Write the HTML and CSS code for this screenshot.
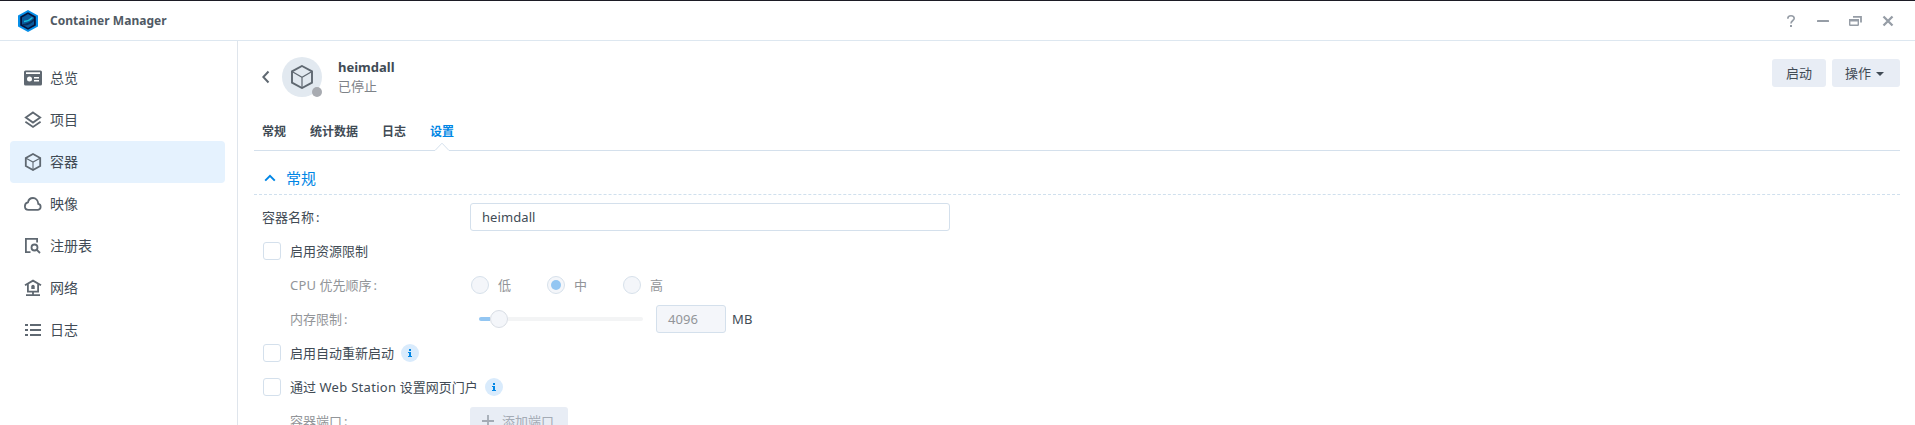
FILE: index.html
```html
<!DOCTYPE html>
<html lang="zh-CN">
<head>
<meta charset="utf-8">
<title>Container Manager</title>
<link rel="stylesheet" href="styles.css">
</head>
<body>
<div class="window">
  <header class="titlebar">
    <svg class="logo" width="22" height="24" viewBox="0 0 22 24">
      <path d="M11 1L21 6.500V17.500L11 23L1 17.500V6.500Z" fill="#078fe8"/>
      <path d="M11 3.200L18.800 7.600V16.400L11 20.800L3.200 16.400V7.600Z" fill="#07133a"/>
      <path d="M11 5L17 8.500V15.500L11 19L5 15.500V8.500Z" fill="#0a5a9c"/>
      <path d="M5 15C9 15 14 13 17 9.500V12C14 15 10 17 6.500 16.400Z" fill="#07305f"/>
      <path d="M7 12.500C10 12.300 13 11 15.500 8.500" fill="none" stroke="#18c0dc" stroke-width="1.300"/>
    </svg>
    <h1 class="title">Container Manager</h1>
    <div class="controls">
      <svg width="12" height="12" viewBox="0 0 12 12"><path d="M2.800 3.700C2.800 1.700 4.200 .8 6 .8S9.200 1.900 9.200 3.500C9.200 5.500 6 5.600 6 8.400" fill="none" stroke="#969da6" stroke-width="1.600"/><rect x="5" y="10" width="2" height="2" fill="#969da6"/></svg>
      <svg width="12" height="12" viewBox="0 0 12 12"><rect y="5" width="12" height="2" rx=".5" fill="#969da6"/></svg>
      <svg width="13" height="12" viewBox="0 0 13 12"><path d="M4 1.900H12V7.500" fill="none" stroke="#969da6" stroke-width="1.800"/><rect x=".7" y="4.700" width="8.600" height="5.600" rx=".5" fill="none" stroke="#969da6" stroke-width="1.400"/><path d="M0 4H10V6.500H0Z" fill="#969da6"/></svg>
      <svg width="12" height="12" viewBox="0 0 12 12"><path d="M1.500 1.500L10.500 10.500M10.500 1.500L1.500 10.500" stroke="#969da6" stroke-width="2.300"/></svg>
    </div>
  </header>
  <div class="body">
    <nav class="sidebar">
      <a class="nav-item"><svg class="icon" viewBox="0 0 18 18"><path fill-rule="evenodd" d="M1.500 1.500H16.500Q18 1.500 18 3V15Q18 16.500 16.500 16.500H1.500Q0 16.500 0 15V3Q0 1.500 1.500 1.500ZM2 3.200V5H16V3.200ZM5.500 7.500A2.500 2.500 0 1 0 5.500 12.500A2.500 2.500 0 1 0 5.500 7.500ZM10 8V9.400H15V8ZM10 11V12.400H15V11Z" fill="#5f6871"/></svg><span>总览</span></a>
      <a class="nav-item"><svg class="icon line" viewBox="0 0 18 18"><path d="M9 1.400L16.200 6.500L9 11.600L1.800 6.500ZM1.400 10.700L9 16L16.600 10.700"/></svg><span>项目</span></a>
      <a class="nav-item active"><svg class="icon line" viewBox="0 0 18 18"><path d="M9 1L16.200 5V13L9 17L1.800 13V5Z"/><path class="thin" d="M2 5.200L9 9L16 5.200M9 9V17"/></svg><span>容器</span></a>
      <a class="nav-item"><svg class="icon line" viewBox="0 0 18 18"><path d="M4.500 14.800H14A3 3 0 0 0 14.300 8.900C14 5.500 11.700 3 9 3C6.600 3 4.500 4.500 4 7.300C2 7.700 .9 9.300 .9 11.200C.9 13.200 2.400 14.800 4.500 14.800Z"/></svg><span>映像</span></a>
      <a class="nav-item"><svg class="icon line" viewBox="0 0 18 18"><path d="M6.500 15.100H1.900V1.900H13.100V5.500"/><circle cx="10.500" cy="10.500" r="3"/><path d="M12.600 12.600L16 16"/></svg><span>注册表</span></a>
      <a class="nav-item"><svg class="icon line" viewBox="0 0 18 18"><path d="M1 6.300L9 1.600L17 6.300M3.900 5.300V12.600H14.100V5.300M9 12.600V16M2 16.100H16"/><path d="M7.300 7.500Q7.300 5.800 9 5.800T10.700 7.500V10H7.300Z" fill="#5f6871" stroke="none"/></svg><span>网络</span></a>
      <a class="nav-item"><svg class="icon line" viewBox="0 0 18 18"><path d="M1 4H4M6 4H17M1 9H4M6 9H17M1 14H4M6 14H17"/></svg><span>日志</span></a>
    </nav>
    <main class="main">
      <section class="head">
        <svg class="back" width="8" height="14" viewBox="0 0 8 14"><path d="M6.500 1.500L1.300 7L6.500 12.500" fill="none" stroke="#5f6871" stroke-width="2"/></svg>
        <div class="avatar">
          <svg width="22" height="24" viewBox="0 0 22 24" fill="none" stroke="#5f6871"><path d="M11 1L21 6.400V17.600L11 23L1 17.600V6.400Z" stroke-width="1.900"/><path d="M1 6.500L11 12.200L21 6.500M11 12V23" stroke-width="1.200"/></svg>
          <span class="status-dot"></span>
        </div>
        <div class="ident"><strong class="name">heimdall</strong><span class="state">已停止</span></div>
        <div class="actions"><button class="btn">启动</button><button class="btn menu">操作<i class="caret"></i></button></div>
      </section>
      <div class="tabs">
        <a class="tab">常规</a><a class="tab">统计数据</a><a class="tab">日志</a>
        <a class="tab current">设置<svg class="notch" width="16" height="9" viewBox="0 0 16 9"><path d="M0 7H16V9H0Z" fill="#fff"/><path d="M0 8.500H1L8 1.200L15 8.500H16" fill="#fff" stroke="#d4e0ec"/></svg></a>
      </div>
      <h2 class="section"><svg width="12" height="8" viewBox="0 0 12 8"><path d="M1.200 6.600L6 1.900L10.800 6.600" fill="none" stroke="#0086e5" stroke-width="2"/></svg>常规</h2>
      <form class="form">
        <div class="row"><span class="label">容器名称<span class="colon">:</span></span><span class="input wide">heimdall</span></div>
        <div class="row"><i class="check"></i><span>启用资源限制</span></div>
        <div class="row off"><span class="label sub"><span class="cpu">CPU</span> 优先顺序<span class="colon">:</span></span>
          <span class="option"><i class="radio"></i>低</span><span class="option"><i class="radio on"></i>中</span><span class="option"><i class="radio"></i>高</span></div>
        <div class="row off"><span class="label sub">内存限制<span class="colon">:</span></span>
          <span class="slider"><i class="fill"></i><i class="knob"></i><i class="rest"></i></span>
          <span class="input num">4096</span><span class="unit">MB</span></div>
        <div class="row"><i class="check"></i><span>启用自动重新启动</span><svg class="info" viewBox="0 0 18 18"><circle cx="9" cy="9" r="9" fill="#d9ebfc"/><path d="M8 5H10V7H8ZM7 8H10V12H11V13H7V12H8V9H7Z" fill="#0086e5"/></svg></div>
        <div class="row"><i class="check"></i><span>通过 <span class="product">Web Station</span> 设置网页门户</span><svg class="info" viewBox="0 0 18 18"><circle cx="9" cy="9" r="9" fill="#d9ebfc"/><path d="M8 5H10V7H8ZM7 8H10V12H11V13H7V12H8V9H7Z" fill="#0086e5"/></svg></div>
        <div class="row off"><span class="label sub">容器端口<span class="colon">:</span></span><span class="add"><svg width="12" height="12" viewBox="0 0 12 12"><path d="M6 0V12M0 6H12" stroke="#a4abb5" stroke-width="1.800"/></svg><span>添加端口</span></span></div>
      </form>
    </main>
  </div>
</div>
</body>
</html>
```
FILE: styles.css
```css
* { box-sizing: border-box; }
body { margin: 0; overflow: hidden; background: #fff; color: #414b55; font: 13px/20px "Noto Sans", "Noto Sans CJK SC", sans-serif; }
.window { height: 425px; overflow: hidden; display: flex; flex-direction: column; border-top: 1px solid #1c1b25; }
.titlebar { flex: none; height: 40px; display: flex; align-items: center; padding: 0 21px 0 17px; border-bottom: 1px solid #dde7f0; }
.title { margin: 0 0 0 11px; color: #505a64; font-size: 12px; line-height: 20px; font-weight: 700; letter-spacing: .04px; }
.controls { margin-left: auto; display: flex; align-items: center; gap: 20px; }
.body { flex: 1; min-height: 0; display: flex; }
.sidebar { flex: none; width: 238px; padding: 16px 12px 0 10px; border-right: 1px solid #dfe5ec; }
.nav-item { height: 42px; display: flex; align-items: center; gap: 8px; padding-left: 14px; border-radius: 4px; font-size: 14px; }
.nav-item.active { background: #e5f2fe; }
.icon { width: 18px; height: 18px; }
.line { fill: none; stroke: #5f6871; stroke-width: 1.800; }
.thin { stroke-width: 1.100; }
.main { flex: 1; min-width: 0; padding: 16px 15px 0 16px; }
.head { height: 40px; display: flex; align-items: center; padding-left: 8px; }
.avatar { position: relative; width: 40px; height: 40px; margin-left: 12px; display: flex; align-items: center; justify-content: center; border-radius: 50%; background: #e2e9f0; }
.status-dot { position: absolute; right: 0; bottom: 0; width: 10px; height: 10px; border-radius: 50%; background: #a8abb1; }
.ident { display: flex; flex-direction: column; margin-left: 16px; }
.name { line-height: 20px; }
.state { line-height: 18px; margin-bottom: 2px; color: #7d8288; }
.actions { margin-left: auto; align-self: flex-start; display: flex; gap: 6px; padding-top: 2px; }
.btn { height: 28px; width: 54px; padding: 0 0 1px; display: flex; align-items: center; justify-content: center; border: 0; border-radius: 3px; background: #e8edf5; color: #414b55; font: inherit; }
.btn.menu { width: 68px; justify-content: flex-start; padding-left: 13px; gap: 5px; }
.caret { margin-top: 2px; border: 4px solid transparent; border-top-color: #414b55; border-bottom: 0; }
.tabs { height: 54px; display: flex; gap: 24px; padding: 25px 8px 0; border-bottom: 1px solid #d4e0ec; font-size: 12px; font-weight: 700; }
.tab { position: relative; white-space: nowrap; }
.tab.current { color: #0086e5; }
.notch { position: absolute; left: 4px; bottom: -1px; }
.section { height: 44px; margin: 0; padding: 10px 0 0 10px; display: flex; align-items: center; gap: 10px; border-bottom: 1px dashed #d0e0ee; color: #0086e5; font-size: 15px; font-weight: 400; }
.form { padding: 5px 8px 0; }
.row { height: 34px; display: flex; align-items: center; white-space: nowrap; }
.off { color: #929599; }
.label { flex: none; width: 208px; }
.label.sub { padding-left: 28px; }
.colon { padding-left: 2px; }
.cpu { letter-spacing: .2px; }
.product { letter-spacing: .3px; }
.input { height: 28px; display: flex; align-items: center; padding-left: 11px; border: 1px solid #d4e0ec; border-radius: 3px; letter-spacing: .08px; }
.wide { width: 480px; }
.num { width: 70px; background: #f4f6fa; }
.unit { margin-left: 6px; color: #414b55; letter-spacing: .3px; }
.check { width: 18px; height: 18px; margin: 0 9px 0 1px; border: 1px solid #d4e0ec; border-radius: 3px; }
.option { width: 76px; display: flex; align-items: center; gap: 9px; padding-left: 1px; }
.radio { width: 18px; height: 18px; display: grid; place-items: center; border: 1px solid #d7e1eb; border-radius: 50%; background: #f4f6fa; }
.radio.on::after { content: ""; width: 10px; height: 10px; border-radius: 50%; background: #93c6f2; }
.slider { width: 164px; margin: 0 13px 0 9px; display: flex; align-items: center; }
.fill { width: 11px; height: 4px; border-radius: 2px 0 0 2px; background: #93c6f2; }
.knob { width: 18px; height: 18px; border: 1px solid #d9dee5; border-radius: 50%; background: #f4f6fa; }
.rest { flex: 1; height: 4px; border-radius: 0 2px 2px 0; background: #f3f4f5; }
.info { width: 18px; height: 18px; margin-left: 7px; }
.add { width: 98px; height: 28px; display: flex; align-items: center; gap: 8px; padding-left: 12px; border-radius: 3px; background: #e8edf5; color: #a4abb5; }
.nav-item span, .row > span:not(.input, .slider, .option, .add), .add span { padding-bottom: 1px; }
```
